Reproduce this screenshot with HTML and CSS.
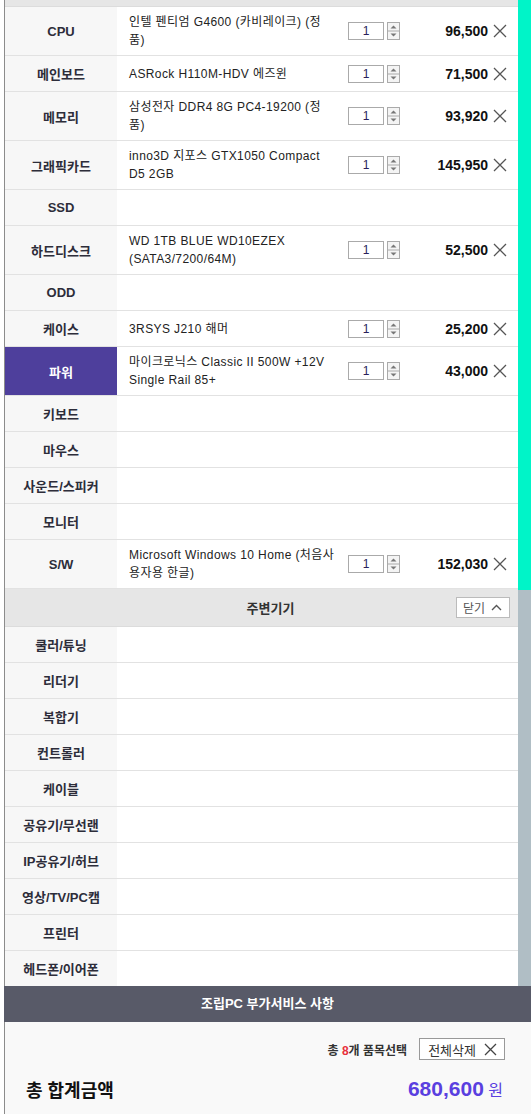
FILE: index.html
```html
<!DOCTYPE html>
<html lang="ko">
<head>
    <meta charset="UTF-8">
    <meta name="viewport" content="width=device-width, initial-scale=1.0">
    <title>조립PC 견적</title>
    <link rel="stylesheet" href="styles.css">
</head>
<body>
<div class="wrap">
    <div class="list-area">
        <div class="list">
            <div class="top-strip"></div>

            <div class="row"><div class="label">CPU</div><div class="item"><div class="name">인텔 펜티엄 G4600 (카비레이크) (정품)</div><div class="qty"><span class="qty-box">1</span><svg class="spin" width="13" height="18" viewBox="0 0 13 18"><rect x="0.5" y="0.5" width="12" height="17" fill="#f4f4f4" stroke="#aaa"/><line x1="1" y1="9" x2="12" y2="9" stroke="#aaa"/><path d="M3.5 6.5 L6.5 3.5 L9.5 6.5 Z" fill="#777"/><path d="M3.5 11.5 L6.5 14.5 L9.5 11.5 Z" fill="#777"/></svg></div><div class="price">96,500</div><svg class="del" width="14" height="14" viewBox="0 0 14 14"><path d="M1 1 L13 13 M13 1 L1 13" stroke="#555" stroke-width="1.3"/></svg></div></div>

            <div class="row"><div class="label">메인보드</div><div class="item"><div class="name">ASRock H110M-HDV 에즈윈</div><div class="qty"><span class="qty-box">1</span><svg class="spin" width="13" height="18" viewBox="0 0 13 18"><rect x="0.5" y="0.5" width="12" height="17" fill="#f4f4f4" stroke="#aaa"/><line x1="1" y1="9" x2="12" y2="9" stroke="#aaa"/><path d="M3.5 6.5 L6.5 3.5 L9.5 6.5 Z" fill="#777"/><path d="M3.5 11.5 L6.5 14.5 L9.5 11.5 Z" fill="#777"/></svg></div><div class="price">71,500</div><svg class="del" width="14" height="14" viewBox="0 0 14 14"><path d="M1 1 L13 13 M13 1 L1 13" stroke="#555" stroke-width="1.3"/></svg></div></div>

            <div class="row"><div class="label">메모리</div><div class="item"><div class="name">삼성전자 DDR4 8G PC4-19200 (정품)</div><div class="qty"><span class="qty-box">1</span><svg class="spin" width="13" height="18" viewBox="0 0 13 18"><rect x="0.5" y="0.5" width="12" height="17" fill="#f4f4f4" stroke="#aaa"/><line x1="1" y1="9" x2="12" y2="9" stroke="#aaa"/><path d="M3.5 6.5 L6.5 3.5 L9.5 6.5 Z" fill="#777"/><path d="M3.5 11.5 L6.5 14.5 L9.5 11.5 Z" fill="#777"/></svg></div><div class="price">93,920</div><svg class="del" width="14" height="14" viewBox="0 0 14 14"><path d="M1 1 L13 13 M13 1 L1 13" stroke="#555" stroke-width="1.3"/></svg></div></div>

            <div class="row"><div class="label">그래픽카드</div><div class="item"><div class="name">inno3D 지포스 GTX1050 Compact D5 2GB</div><div class="qty"><span class="qty-box">1</span><svg class="spin" width="13" height="18" viewBox="0 0 13 18"><rect x="0.5" y="0.5" width="12" height="17" fill="#f4f4f4" stroke="#aaa"/><line x1="1" y1="9" x2="12" y2="9" stroke="#aaa"/><path d="M3.5 6.5 L6.5 3.5 L9.5 6.5 Z" fill="#777"/><path d="M3.5 11.5 L6.5 14.5 L9.5 11.5 Z" fill="#777"/></svg></div><div class="price">145,950</div><svg class="del" width="14" height="14" viewBox="0 0 14 14"><path d="M1 1 L13 13 M13 1 L1 13" stroke="#555" stroke-width="1.3"/></svg></div></div>

            <div class="row"><div class="label">SSD</div><div class="item"></div></div>

            <div class="row"><div class="label">하드디스크</div><div class="item"><div class="name">WD 1TB BLUE WD10EZEX (SATA3/7200/64M)</div><div class="qty"><span class="qty-box">1</span><svg class="spin" width="13" height="18" viewBox="0 0 13 18"><rect x="0.5" y="0.5" width="12" height="17" fill="#f4f4f4" stroke="#aaa"/><line x1="1" y1="9" x2="12" y2="9" stroke="#aaa"/><path d="M3.5 6.5 L6.5 3.5 L9.5 6.5 Z" fill="#777"/><path d="M3.5 11.5 L6.5 14.5 L9.5 11.5 Z" fill="#777"/></svg></div><div class="price">52,500</div><svg class="del" width="14" height="14" viewBox="0 0 14 14"><path d="M1 1 L13 13 M13 1 L1 13" stroke="#555" stroke-width="1.3"/></svg></div></div>

            <div class="row"><div class="label">ODD</div><div class="item"></div></div>

            <div class="row"><div class="label">케이스</div><div class="item"><div class="name">3RSYS J210 해머</div><div class="qty"><span class="qty-box">1</span><svg class="spin" width="13" height="18" viewBox="0 0 13 18"><rect x="0.5" y="0.5" width="12" height="17" fill="#f4f4f4" stroke="#aaa"/><line x1="1" y1="9" x2="12" y2="9" stroke="#aaa"/><path d="M3.5 6.5 L6.5 3.5 L9.5 6.5 Z" fill="#777"/><path d="M3.5 11.5 L6.5 14.5 L9.5 11.5 Z" fill="#777"/></svg></div><div class="price">25,200</div><svg class="del" width="14" height="14" viewBox="0 0 14 14"><path d="M1 1 L13 13 M13 1 L1 13" stroke="#555" stroke-width="1.3"/></svg></div></div>

            <div class="row"><div class="label active">파워</div><div class="item"><div class="name">마이크로닉스 Classic II 500W +12V Single Rail 85+</div><div class="qty"><span class="qty-box">1</span><svg class="spin" width="13" height="18" viewBox="0 0 13 18"><rect x="0.5" y="0.5" width="12" height="17" fill="#f4f4f4" stroke="#aaa"/><line x1="1" y1="9" x2="12" y2="9" stroke="#aaa"/><path d="M3.5 6.5 L6.5 3.5 L9.5 6.5 Z" fill="#777"/><path d="M3.5 11.5 L6.5 14.5 L9.5 11.5 Z" fill="#777"/></svg></div><div class="price">43,000</div><svg class="del" width="14" height="14" viewBox="0 0 14 14"><path d="M1 1 L13 13 M13 1 L1 13" stroke="#555" stroke-width="1.3"/></svg></div></div>

            <div class="row"><div class="label">키보드</div><div class="item"></div></div>
            <div class="row"><div class="label">마우스</div><div class="item"></div></div>
            <div class="row"><div class="label">사운드/스피커</div><div class="item"></div></div>
            <div class="row"><div class="label">모니터</div><div class="item"></div></div>

            <div class="row"><div class="label">S/W</div><div class="item"><div class="name">Microsoft Windows 10 Home (처음사용자용 한글)</div><div class="qty"><span class="qty-box">1</span><svg class="spin" width="13" height="18" viewBox="0 0 13 18"><rect x="0.5" y="0.5" width="12" height="17" fill="#f4f4f4" stroke="#aaa"/><line x1="1" y1="9" x2="12" y2="9" stroke="#aaa"/><path d="M3.5 6.5 L6.5 3.5 L9.5 6.5 Z" fill="#777"/><path d="M3.5 11.5 L6.5 14.5 L9.5 11.5 Z" fill="#777"/></svg></div><div class="price">152,030</div><svg class="del" width="14" height="14" viewBox="0 0 14 14"><path d="M1 1 L13 13 M13 1 L1 13" stroke="#555" stroke-width="1.3"/></svg></div></div>

            <!-- 주변기기 -->
            <div class="group-head">
                <span class="group-title">주변기기</span>
                <button class="fold-btn">닫기 <svg width="11" height="7" viewBox="0 0 11 7"><path d="M1 6 L5.5 1.5 L10 6" fill="none" stroke="#555" stroke-width="1.4"/></svg></button>
            </div>

            <div class="row"><div class="label">쿨러/튜닝</div><div class="item"></div></div>
            <div class="row"><div class="label">리더기</div><div class="item"></div></div>
            <div class="row"><div class="label">복합기</div><div class="item"></div></div>
            <div class="row"><div class="label">컨트롤러</div><div class="item"></div></div>
            <div class="row"><div class="label">케이블</div><div class="item"></div></div>
            <div class="row"><div class="label">공유기/무선랜</div><div class="item"></div></div>
            <div class="row"><div class="label">IP공유기/허브</div><div class="item"></div></div>
            <div class="row"><div class="label">영상/TV/PC캠</div><div class="item"></div></div>
            <div class="row"><div class="label">프린터</div><div class="item"></div></div>
            <div class="row last"><div class="label">헤드폰/이어폰</div><div class="item"></div></div>
        </div>
        <div class="scrollbar"><div class="thumb"></div></div>
    </div>

    <div class="service-head">조립PC 부가서비스 사항</div>

    <div class="summary">
        <div class="sum-top">
            <span class="count">총 <em>8</em>개 품목선택</span>
            <button class="clear-btn">전체삭제 <svg width="13" height="13" viewBox="0 0 13 13"><path d="M1 1 L12 12 M12 1 L1 12" stroke="#444" stroke-width="1.3"/></svg></button>
        </div>
        <div class="sum-total">
            <span class="total-label">총 합계금액</span>
            <span class="total-price"><strong>680,600</strong> 원</span>
        </div>
    </div>
</div>
</body>
</html>
```

FILE: styles.css
```css
body { margin: 0; background: #fff; font-family: "Liberation Sans", "Noto Sans CJK KR", sans-serif; color: #222; }
.wrap { margin-left: 4px; }

.list-area { display: flex; border-left: 1px solid #8c8c8c; }
.list { flex: 1; }
.scrollbar { width: 13px; background: #b0bec5; }
.scrollbar .thumb { height: 590px; background: #00f4c8; }

.top-strip { height: 6px; background: #e6e6e6; border-bottom: 1px solid #dcdcdc; }

.row { display: flex; min-height: 35px; border-bottom: 1px solid #e2e2e2; }
.row.last { border-bottom: none; }
.label { width: 112px; flex-shrink: 0; background: #f7f7f7; display: flex; align-items: center; justify-content: center; font-size: 13px; font-weight: bold; color: #2d2d3a; }
.label.active { background: #4e3f9c; color: #fff; }

.item { flex: 1; display: flex; align-items: center; padding: 6px 11px 6px 12px; background: #fff; }
.name { width: 207px; margin-right: 12px; font-size: 12px; line-height: 18px; letter-spacing: 0.4px; color: #222; }
.qty { display: flex; align-items: center; gap: 3px; }
.qty-box { width: 34px; height: 16px; border: 1px solid #aaa; background: #fff; font-size: 12px; line-height: 16px; text-align: center; color: #2a1f5c; }
.spin { display: block; }
.price { flex: 1; text-align: right; font-size: 14px; font-weight: bold; color: #111; }
.del { margin-left: 5px; flex-shrink: 0; }

/* 주변기기 */
.group-head { display: grid; grid-template-columns: 1fr auto 1fr; align-items: center; height: 37px; padding: 0 8px 0 26px; background: #e6e6e6; border-bottom: 1px solid #dcdcdc; }
.group-title { grid-column: 2; font-size: 13px; font-weight: bold; color: #333; }
.fold-btn { grid-column: 3; justify-self: end; display: flex; align-items: center; gap: 6px; height: 21px; padding: 0 7px 0 6px; border: 1px solid #bbb; background: #fff; font-family: inherit; font-size: 12px; color: #555; }

.service-head { height: 36px; line-height: 36px; background: #585a68; color: #fff; text-align: center; font-size: 13px; font-weight: bold; }

.summary { border-left: 1px solid #8c8c8c; background: #f9f9f9; padding: 16px 28px 20px 21px; }
.sum-top { display: flex; justify-content: flex-end; align-items: center; gap: 12px; }
.count { font-size: 12px; font-weight: bold; color: #333; }
.count em { font-style: normal; color: #e8303c; }
.clear-btn { display: flex; align-items: center; gap: 8px; height: 22px; padding: 0 7px 0 8px; margin-right: -2px; border: 1px solid #999; background: #fff; font-family: inherit; font-size: 13px; color: #333; }
.sum-total { display: flex; justify-content: space-between; align-items: center; margin-top: 16px; }
.total-label { font-size: 18px; font-weight: bold; color: #111; }
.total-price { font-size: 16px; color: #5a3fe0; }
.total-price strong { font-size: 21px; }
```
